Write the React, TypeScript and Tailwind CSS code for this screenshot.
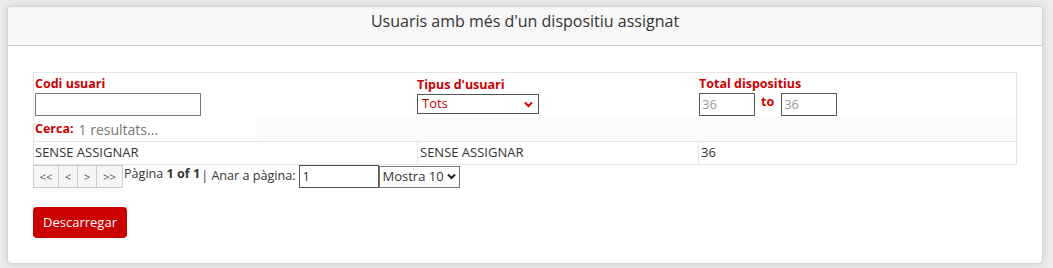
import React from "react";

function Chevron({ color }: { color: string }) {
  return (
    <svg width="9" height="7" viewBox="0 0 9 7" className="shrink-0">
      <path d="M1 1.5 L4.5 5 L8 1.5" fill="none" stroke={color} strokeWidth="2" />
    </svg>
  );
}

export default function App() {
  return (
    <div
      className="w-[1053px] h-[268px] bg-[#ececec] pt-[6px] pl-[7px]"
      style={{ fontFamily: '"Open Sans", "Noto Sans", sans-serif' }}
    >
      <div className="w-[1036px] h-[258px] bg-white border border-[#d2d2d2] rounded-[4px] shadow-[0_0_8px_rgba(0,0,0,0.12)] overflow-hidden">
        <div className="h-[39px] bg-[#f7f7f7] border-b border-[#cccccc] pt-[3px] text-center leading-[22px] text-[16px] text-[#333]">
          Usuaris amb més d'un dispositiu assignat
        </div>
        <div className="pl-[25px] pr-[25px] pt-[26px]">
          <div className="border border-[#e6e6e6]">
            {/* filter row */}
            <div className="flex h-[44px]">
              <div className="w-[383px] pl-[1px] pt-[2px]">
                <div className="text-[12.5px] font-bold text-[#cc0000] leading-[18px]">Codi usuari</div>
                <div className="w-[166px] h-[23px] border border-[#777] bg-white" />
              </div>
              <div className="w-[281px] pl-[0px] pt-[3px]">
                <div className="text-[12.5px] font-bold text-[#cc0000] leading-[18px]">Tipus d'usuari</div>
                <div className="w-[122px] h-[20px] border border-[#555] bg-white flex items-center justify-between pl-[4px] pr-[5px] text-[13px] text-[#cc0000]">
                  <span>Tots</span>
                  <Chevron color="#cc0000" />
                </div>
              </div>
              <div className="flex-1 pl-[1px] pt-[2px]">
                <div className="text-[12.5px] font-bold text-[#cc0000] leading-[18px]">Total dispositius</div>
                <div className="flex items-center">
                  <div className="w-[56px] h-[23px] border border-[#555] bg-white text-[13px] text-[#999] pl-[2px] leading-[21px]">36</div>
                  <span className="text-[12.5px] font-bold text-[#cc0000] ml-[6px] mr-[7px] -mt-[4px]">to</span>
                  <div className="w-[56px] h-[23px] border border-[#555] bg-white text-[13px] text-[#999] pl-[2px] leading-[21px]">36</div>
                </div>
              </div>
            </div>
            {/* cerca row */}
            <div className="flex h-[25px] border-b border-[#e6e6e6]">
              <div className="w-[223px] flex items-center pl-[1px]">
                <span className="font-bold text-[#cc0000] text-[12.5px]">Cerca:</span>
                <span className="text-[#777] ml-[5px] text-[14px]">1 resultats...</span>
              </div>
              <div className="flex-1 bg-[#fbfbfb]" />
            </div>
            {/* data row */}
            <div className="flex h-[22px] text-[13px] text-[#333]">
              <div className="w-[383px] pl-[1px] flex items-center">SENSE ASSIGNAR</div>
              <div className="w-[281px] border-l border-[#e6e6e6] pl-[2px] flex items-center">SENSE ASSIGNAR</div>
              <div className="flex-1 border-l border-[#e6e6e6] pl-[2px] flex items-center">36</div>
            </div>
          </div>
          {/* pager */}
          <div className="flex items-center h-[23px] text-[12.6px] text-[#333]">
            <div className="flex h-[23px] border border-[#ccc] bg-[#f5f5f5] text-[11.5px] text-[#555]">
              <div className="w-[25px] flex items-center justify-center border-r border-[#ccc]">&lt;&lt;</div>
              <div className="w-[19px] flex items-center justify-center border-r border-[#ccc]">&lt;</div>
              <div className="w-[19px] flex items-center justify-center border-r border-[#ccc]">&gt;</div>
              <div className="w-[25px] flex items-center justify-center">&gt;&gt;</div>
            </div>
            <span className="ml-[1px] -mt-[4px]">Pàgina <b>1 of 1</b></span>
            <span className="ml-[1px]">| Anar a pàgina:</span>
            <div className="ml-[3px] w-[80px] h-[23px] border border-[#555] bg-white pl-[3px] leading-[21px] text-[13px]">1</div>
            <div className="w-[81px] h-[22px] border border-[#777] bg-white flex items-center justify-between pl-[3px] pr-[3px] text-[13px]">
              <span>Mostra 10</span>
              <Chevron color="#222" />
            </div>
          </div>
          <div className="mt-[19px]">
            <button className="w-[94px] h-[31px] bg-[#cc0000] rounded-[4px] text-white text-[13px]">Descarregar</button>
          </div>
        </div>
      </div>
    </div>
  );
}
